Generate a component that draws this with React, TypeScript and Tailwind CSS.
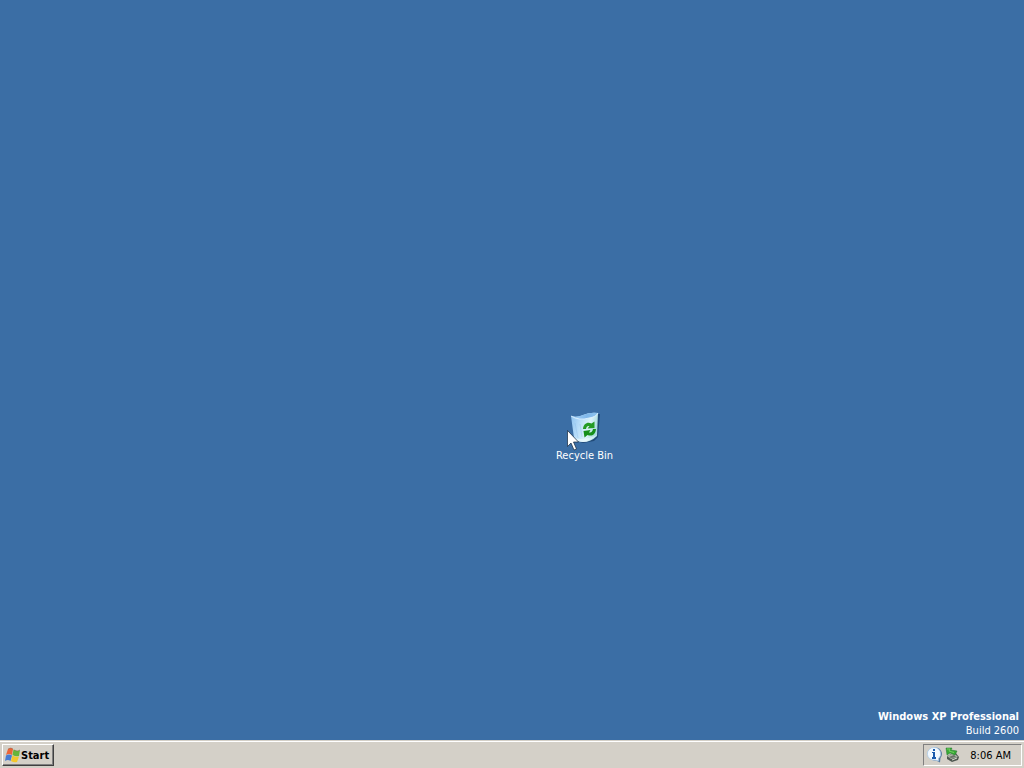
import React from "react";

function RecycleBinIcon() {
  return (
    <svg viewBox="0 0 32 32" className="block size-8" aria-hidden="true">
      <defs>
        <linearGradient id="bin" x1="0" y1="0" x2="1" y2="0.3">
          <stop offset="0" stopColor="#8ac0ef" />
          <stop offset="0.4" stopColor="#b9defa" />
          <stop offset="0.75" stopColor="#dcf3f9" />
          <stop offset="1" stopColor="#a9dce0" />
        </linearGradient>
        <linearGradient id="rim" x1="0" y1="0" x2="1" y2="0">
          <stop offset="0" stopColor="#a6d3f8" />
          <stop offset="0.6" stopColor="#7fb7ea" />
          <stop offset="1" stopColor="#8fc5ee" />
        </linearGradient>
      </defs>
      <path d="M28 3 L31 3 L29 26 L25 30 L14 32 L8 30 L25 28Z" fill="#193f69" opacity="0.75" />
      <path d="M2 5 Q8 7 14 4 Q21 1 29 2 L28 25 Q22 31 14 31 Q8 31 5 27Z" fill="url(#bin)" />
      <path d="M2 5 Q8 7 14 4 Q21 1 29 2 Q27 6 20 7 Q10 10 2 5Z" fill="url(#rim)" />
      <path d="M2 5 Q10 10 20 7 Q27 6 29 2" fill="none" stroke="#e4f5ff" strokeWidth="0.8" />
      <path d="M6 12 L9 27 M11 13 L13 26" stroke="#78afe0" opacity="0.25" />
      <path d="M5 27 Q15 30 28 24 Q21 31 14 31 Q8 31 5 27Z" fill="#effbfd" opacity="0.6" />
      <path d="M14 18 C14.5 12.5 18.5 10.5 22.5 12.5 L25.5 10.5 L25.5 17 L18.5 17.5 L20.5 15 C18.5 14.5 17.5 15.5 17 18Z" fill="#249b25" />
      <path d="M27 18 C26.5 24 22.5 25.5 18.5 24 L15.5 26.5 L14.5 20 L21.5 19 L20 21.5 C22.5 22 23.5 20.5 24 18Z" fill="#169019" />
    </svg>
  );
}

function Cursor() {
  return (
    <svg viewBox="0 0 12 21" className="absolute left-[567px] top-[430px] h-[21px] w-3" aria-hidden="true">
      <path d="M0.5 0.5 V16.5 L4 13 L7 20 L9.5 19 L6.5 12 H11.5Z" fill="#fff" stroke="#14273c" strokeWidth="0.7" />
    </svg>
  );
}

function WindowsFlag() {
  return (
    <svg viewBox="0 0 16 16" className="block size-4" aria-hidden="true">
      <path d="M3 2 Q6 0 8 2 L7 8 Q4 6 1 8Z" fill="#eb6538" />
      <path d="M8.5 2.5 Q12 5 15 3 L14 9 Q11 10 7.5 8Z" fill="#67b53b" />
      <path d="M1 8.5 Q4 6.5 7 8.5 L5.5 14 Q3 12 0 14Z" fill="#467bd2" />
      <path d="M7.5 8.5 Q11 10.5 14 9.5 L12 15 Q9 16 6 14Z" fill="#f4c72c" />
      <path d="M3 2 Q6 0 8 2 M9 3 Q12 5 15 3" fill="none" stroke="#7c5542" strokeWidth="0.4" />
    </svg>
  );
}

function InfoIcon() {
  return (
    <svg viewBox="0 0 16 16" className="block size-4" aria-hidden="true">
      <path d="M9 0.5 A6.5 6.5 0 0 1 14.5 11 L14 15.5 L10 13.5 A7 6.5 0 1 1 9 0.5Z" fill="#58799f" />
      <path d="M8 0.5 A6.5 6.3 0 0 1 12.5 11.5 L12.5 14 L9 13 A6.5 6.3 0 1 1 8 0.5Z" fill="#f0f8ff" stroke="#a3c5e5" strokeWidth="0.7" />
      <path d="M7 2 H9 V4 H7Z M6 5 H9 V10 H10 V12 H6 V10 H7 V6 H6Z" fill="#1759ad" />
    </svg>
  );
}

function RemoveHardwareIcon() {
  return (
    <svg viewBox="0 0 16 16" className="block size-4" aria-hidden="true">
      <path d="M3 9 L11 5 L15 10 L14 13 L8 15 L3 12Z" fill="#4e5750" />
      <path d="M3 9 L10 6 L14 10 L7 12Z" fill="#aab4a6" />
      <path d="M5 10 L10 8 L12 10 L7 11Z" fill="#697268" />
      <path d="M8 13 L13 11" stroke="#dce0d2" />
      <path d="M2 1 L8 1 L7 3 L13 4 L11 8 L6 6 L3 8Z" fill="#38aa35" stroke="#21752c" strokeWidth="0.5" />
      <path d="M3 2 H6 L5 4 L10 5.5" fill="none" stroke="#75cc63" />
    </svg>
  );
}

export default function App() {
  return (
    <div className="flex min-h-screen cursor-default flex-col overflow-hidden bg-[#3b6ea5] font-['DejaVu_Sans_Condensed','DejaVu_Sans',sans-serif] text-[11px] leading-[14px] text-white">
      <main className="relative flex flex-1 flex-col">
        <button type="button" className="absolute left-[547px] top-[411px] flex w-[75px] cursor-default flex-col items-center gap-1.5">
          <RecycleBinIcon />
          <span>Recycle Bin</span>
        </button>
        <Cursor />
        <div className="mt-auto self-end px-[5px] pb-0.5 text-right">
          <p className="font-bold">Windows XP Professional</p>
          <p>Build 2600</p>
        </div>
      </main>
      <footer className="flex h-7 items-center justify-between border-t border-[#d4d0c8] bg-[#d4d0c8] px-0.5 text-black shadow-[inset_0_1px_0_#ffffff]">
        <button type="button" className="mt-px flex h-[22px] cursor-default items-center border border-b-[#404040] border-l-white border-r-[#404040] border-t-white pl-0.5 pr-1 font-bold shadow-[inset_-1px_-1px_0_#808080]">
          <WindowsFlag />
          <span className="pt-0.5">Start</span>
        </button>
        <section aria-label="Notification area" className="mt-px flex h-[22px] items-center gap-0.5 border border-b-white border-l-[#808080] border-r-white border-t-[#808080] pl-0.5 pr-2.5">
          <InfoIcon />
          <RemoveHardwareIcon />
          <time className="ml-2 pt-0.5">8:06 AM</time>
        </section>
      </footer>
    </div>
  );
}
